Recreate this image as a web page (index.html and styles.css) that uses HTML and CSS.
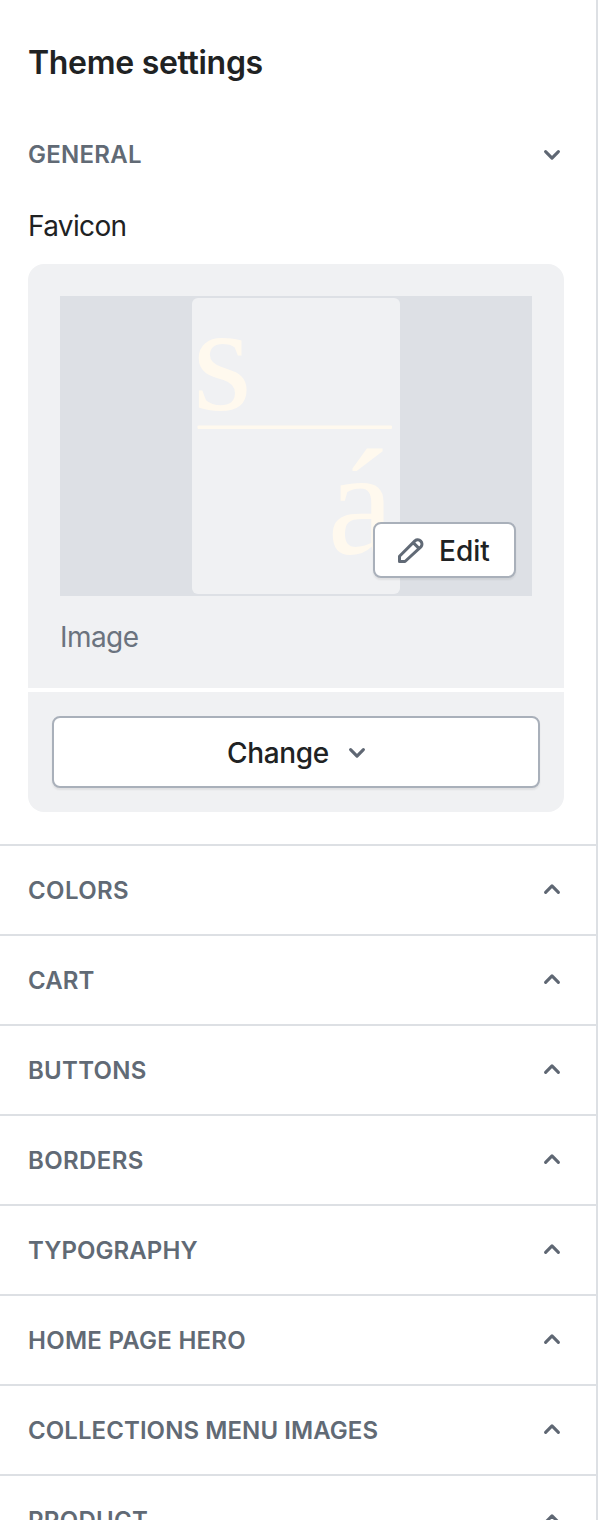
FILE: index.html
```html
<!DOCTYPE html>
<html lang="en">
<head>
<meta charset="utf-8">
<title>Theme settings</title>
<link rel="stylesheet" href="styles.css">
</head>
<body>
<svg class="defs" width="0" height="0" aria-hidden="true">
  <symbol id="down" viewBox="0 0 20 14"><path d="M3.6 3.6 10 10.1l6.4-6.5"/></symbol>
  <symbol id="up" viewBox="0 0 20 14"><path d="M3.6 10.3 10 3.8l6.4 6.5"/></symbol>
</svg>
<main class="panel">
  <h1 class="title">Theme settings</h1>
  <section class="general">
    <div class="general-head"><h2 class="label">General</h2><svg class="chevron"><use href="#down"/></svg></div>
    <p class="field">Favicon</p>
    <div class="card">
      <div class="card-top">
        <div class="preview">
          <svg class="thumb" viewBox="0 0 208 296">
            <rect width="208" height="296" rx="6" fill="#f0f1f3"/>
            <g fill="#fff9ee" class="mark">
              <text transform="translate(.5 112) scale(1.02 1)" font-size="150">s</text>
              <rect x="5.500" y="127.500" width="194.500" height="3.500" rx="1"/>
              <text transform="translate(135.500 255.500)" font-size="150">á</text>
            </g>
          </svg>
          <button class="button edit">
            <svg class="pencil" viewBox="0 0 28 28"><path d="M2.500 25.500v-5.200L17.900 4.900a4.250 4.250 0 0 1 6 6L8 25.500zM16.200 6.600l5.800 5.800"/></svg>
            <span>Edit</span>
          </button>
        </div>
        <p class="caption">Image</p>
      </div>
      <div class="card-bottom">
        <button class="button change"><span>Change</span><svg class="chevron"><use href="#down"/></svg></button>
      </div>
    </div>
  </section>
  <section class="row"><h2 class="label loose">Colors</h2><svg class="chevron"><use href="#up"/></svg></section>
  <section class="row"><h2 class="label tight">Cart</h2><svg class="chevron"><use href="#up"/></svg></section>
  <section class="row"><h2 class="label">Buttons</h2><svg class="chevron"><use href="#up"/></svg></section>
  <section class="row"><h2 class="label loose">Borders</h2><svg class="chevron"><use href="#up"/></svg></section>
  <section class="row"><h2 class="label tight">Typography</h2><svg class="chevron"><use href="#up"/></svg></section>
  <section class="row"><h2 class="label">Home page hero</h2><svg class="chevron"><use href="#up"/></svg></section>
  <section class="row"><h2 class="label tight">Collections menu images</h2><svg class="chevron"><use href="#up"/></svg></section>
  <section class="row"><h2 class="label">Product</h2><svg class="chevron"><use href="#up"/></svg></section>
</main>
</body>
</html>
```
FILE: styles.css
```css
* { box-sizing: border-box; }
body { margin: 0; background: #fff; color: #202223; font-family: Inter, "Liberation Sans", sans-serif; }
h1, h2, p { margin: 0; }
.defs { display: block; }
.panel { height: 1520px; overflow: hidden; border-right: 2px solid #dde0e4; }
.title { padding: 43px 28px 0; font-size: 32px; line-height: 40px; font-weight: 600; letter-spacing: -0.3px; }
.general { padding: 48px 32px 32px 28px; }
.general-head { display: flex; justify-content: space-between; align-items: center; height: 48px; padding-right: 2px; }
.label { padding-top: 2px; font-size: 24px; line-height: 32px; font-weight: 570; letter-spacing: 0.27px; text-transform: uppercase; color: #616a75; }
.general-head .label { padding-top: 0; }
.loose { letter-spacing: 0.4px; }
.tight { letter-spacing: 0.08px; }
.chevron { width: 20px; height: 14px; flex: none; fill: none; stroke: #5f6773; stroke-width: 3.1; stroke-linecap: round; stroke-linejoin: round; }
.field { margin-top: 27px; font-size: 28px; line-height: 40px; letter-spacing: -0.65px; }
.card { display: flex; flex-direction: column; gap: 4px; margin-top: 18px; }
.card-top { height: 424px; padding: 32px; border-radius: 16px 16px 0 0; background: #f0f1f3; }
.preview { position: relative; display: flex; justify-content: center; align-items: center; height: 300px; background: #dde0e5; }
.thumb { width: 208px; height: 296px; }
.mark { font-family: "Liberation Serif", serif; }
.caption { margin-top: 21px; font-size: 28px; line-height: 40px; color: #6b737e; letter-spacing: -0.55px; }
.button { display: flex; align-items: center; justify-content: center; padding: 0; border: 2px solid #a9b0ba; border-radius: 8px; background: #fff; color: #202223; font: 500 28px/40px Inter, "Liberation Sans", sans-serif; box-shadow: 0 2px 2px rgba(0, 0, 0, .07); }
.button span { padding-top: 2px; }
.edit { position: absolute; right: 16px; bottom: 18px; width: 143px; height: 56px; padding-right: 2px; gap: 14px; }
.pencil { width: 28px; height: 28px; margin-bottom: 1px; fill: none; stroke: #616a76; stroke-width: 3; stroke-linejoin: round; }
.card-bottom { height: 120px; padding: 24px; border-radius: 0 0 16px 16px; background: #f0f1f3; }
.change { width: 100%; height: 72px; padding-left: 2px; gap: 18px; letter-spacing: -0.35px; }
.change .chevron { margin-top: 2px; }
.row { display: flex; justify-content: space-between; align-items: center; height: 90px; padding: 0 34px 0 28px; border-top: 2px solid #dde0e4; }
.row .chevron { margin-bottom: 2px; }
```
